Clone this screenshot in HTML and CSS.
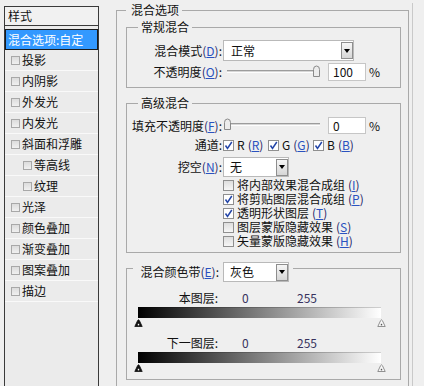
FILE: index.html
```html
<!DOCTYPE html>
<html lang="zh-CN">
<head>
<meta charset="utf-8">
<title>图层样式</title>
<link rel="stylesheet" href="styles.css">
</head>
<body>
<div class="dialog">
  <aside class="styles-panel">
    <div class="panel-head">样式</div>
    <ul class="style-list">
      <li class="item selected">混合选项:自定</li>
      <li class="item"><span class="lcb"></span>投影</li>
      <li class="item"><span class="lcb"></span>内阴影</li>
      <li class="item"><span class="lcb"></span>外发光</li>
      <li class="item"><span class="lcb"></span>内发光</li>
      <li class="item"><span class="lcb"></span>斜面和浮雕</li>
      <li class="item sub"><span class="lcb"></span>等高线</li>
      <li class="item sub"><span class="lcb"></span>纹理</li>
      <li class="item"><span class="lcb"></span>光泽</li>
      <li class="item"><span class="lcb"></span>颜色叠加</li>
      <li class="item"><span class="lcb"></span>渐变叠加</li>
      <li class="item"><span class="lcb"></span>图案叠加</li>
      <li class="item"><span class="lcb"></span>描边</li>
    </ul>
  </aside>

  <main class="main">
    <fieldset class="outer">
      <legend class="outer-legend">混合选项</legend>

      <fieldset class="group general">
        <legend>常规混合</legend>
        <div class="row r-mode">
          <span class="lbl">混合模式<span class="p">(<u>D</u>)</span>:</span>
          <div class="select wide"><span>正常</span><span class="arrow"><i></i></span></div>
        </div>
        <div class="row r-opacity">
          <span class="lbl">不透明度<span class="p">(<u>O</u>)</span>:</span>
          <div class="slider">
            <span class="track"></span>
            <svg class="thumb" style="left:89px" width="9" height="12" viewBox="0 0 9 12"><path d="M1.5 11.5V4.5Q1.5 1 4.5 1Q7.5 1 7.5 4.5V11.5Z" fill="#ececec" stroke="#8a8a8a"/></svg>
          </div>
          <span class="num-input">100</span>
          <span class="pct">%</span>
        </div>
      </fieldset>

      <fieldset class="group advanced">
        <legend>高级混合</legend>
        <div class="row r-fill">
          <span class="lbl">填充不透明度<span class="p">(<u>F</u>)</span>:</span>
          <div class="slider">
            <span class="track"></span>
            <svg class="thumb" style="left:0" width="9" height="12" viewBox="0 0 9 12"><path d="M1.5 11.5V4.5Q1.5 1 4.5 1Q7.5 1 7.5 4.5V11.5Z" fill="#ececec" stroke="#8a8a8a"/></svg>
          </div>
          <span class="num-input">0</span>
          <span class="pct">%</span>
        </div>
        <div class="row r-chan">
          <span class="lbl">通道:</span>
          <span class="chan"><span class="ck on"><svg width="9" height="9" viewBox="0 0 9 9"><path d="M1.5 4.5L3.5 7.5L7.8 1" fill="none" stroke="#2446a8" stroke-width="1.5"/></svg></span>R<span class="p">(<u>R</u>)</span></span>
          <span class="chan"><span class="ck on"><svg width="9" height="9" viewBox="0 0 9 9"><path d="M1.5 4.5L3.5 7.5L7.8 1" fill="none" stroke="#2446a8" stroke-width="1.5"/></svg></span>G<span class="p">(<u>G</u>)</span></span>
          <span class="chan"><span class="ck on"><svg width="9" height="9" viewBox="0 0 9 9"><path d="M1.5 4.5L3.5 7.5L7.8 1" fill="none" stroke="#2446a8" stroke-width="1.5"/></svg></span>B<span class="p">(<u>B</u>)</span></span>
        </div>
        <div class="row r-knock">
          <span class="lbl">挖空<span class="p">(<u>N</u>)</span>:</span>
          <div class="select short"><span>无</span><span class="arrow"><i></i></span></div>
        </div>
        <ul class="opt-list">
          <li class="opt"><span class="ck"></span>将内部效果混合成组<span class="p">(<u>I</u>)</span></li>
          <li class="opt"><span class="ck on"><svg width="9" height="9" viewBox="0 0 9 9"><path d="M1.5 4.5L3.5 7.5L7.8 1" fill="none" stroke="#2446a8" stroke-width="1.5"/></svg></span>将剪贴图层混合成组<span class="p">(<u>P</u>)</span></li>
          <li class="opt"><span class="ck on"><svg width="9" height="9" viewBox="0 0 9 9"><path d="M1.5 4.5L3.5 7.5L7.8 1" fill="none" stroke="#2446a8" stroke-width="1.5"/></svg></span>透明形状图层<span class="p">(<u>T</u>)</span></li>
          <li class="opt"><span class="ck"></span>图层蒙版隐藏效果<span class="p">(<u>S</u>)</span></li>
          <li class="opt"><span class="ck"></span>矢量蒙版隐藏效果<span class="p">(<u>H</u>)</span></li>
        </ul>
      </fieldset>

      <fieldset class="group blend">
        <legend><span class="legend-row"><span class="blbl">混合颜色带<span class="p">(<u>E</u>)</span>:</span><span class="select short"><span>灰色</span><span class="arrow"><i></i></span></span></span></legend>
        <div class="blend-block">
          <div class="blend-row"><span class="blend-lbl">本图层:</span><span class="v0">0</span><span class="v1">255</span></div>
          <div class="bar"></div>
          <div class="thumbs">
            <svg class="bthumb left" width="9" height="8" viewBox="0 0 9 8"><path d="M0.8 7.5L3.6 1.6Q4.5 0 5.4 1.6L8.2 7.5Z" fill="#111" stroke="#111" stroke-width="0.8"/><rect x="3.8" y="4.8" width="1.4" height="1.6" fill="#fff"/></svg>
            <svg class="bthumb right" width="9" height="8" viewBox="0 0 9 8"><path d="M0.8 7.5L3.6 1.6Q4.5 0 5.4 1.6L8.2 7.5Z" fill="#fafafa" stroke="#777" stroke-width="0.8"/><rect x="3.8" y="4.8" width="1.4" height="1.6" fill="#555"/></svg>
          </div>
        </div>
        <div class="blend-block second">
          <div class="blend-row"><span class="blend-lbl">下一图层:</span><span class="v0">0</span><span class="v1">255</span></div>
          <div class="bar"></div>
          <div class="thumbs">
            <svg class="bthumb left" width="9" height="8" viewBox="0 0 9 8"><path d="M0.8 7.5L3.6 1.6Q4.5 0 5.4 1.6L8.2 7.5Z" fill="#111" stroke="#111" stroke-width="0.8"/><rect x="3.8" y="4.8" width="1.4" height="1.6" fill="#fff"/></svg>
            <svg class="bthumb right" width="9" height="8" viewBox="0 0 9 8"><path d="M0.8 7.5L3.6 1.6Q4.5 0 5.4 1.6L8.2 7.5Z" fill="#fafafa" stroke="#777" stroke-width="0.8"/><rect x="3.8" y="4.8" width="1.4" height="1.6" fill="#555"/></svg>
          </div>
        </div>
      </fieldset>
    </fieldset>
  </main>
</div>
</body>
</html>
```

FILE: styles.css
```css
* { box-sizing: border-box; }

html, body {
  margin: 0;
  height: 100%;
  overflow: hidden;
  background: #efefef;
}

body {
  font-family: "Noto Sans CJK SC", "Noto Sans", sans-serif;
  font-size: 12px;
  line-height: 14px;
  color: #111;
}

.dialog {
  display: flex;
  align-items: flex-start;
  padding-left: 4px;
  height: 386px;
}

/* ---------- left styles panel ---------- */
.styles-panel {
  flex: none;
  width: 95px;
  height: 400px;
  margin-top: 6px;
  border: 1px solid #3a3a3a;
  background: #ebebeb;
}

.panel-head {
  height: 19px;
  line-height: 18px;
  padding-left: 3px;
  border-bottom: 1px solid #3a3a3a;
  background: #f1f1f1;
}

.style-list {
  list-style: none;
  margin: 3px 0 0;
  padding: 0;
}

.item {
  height: 21px;
  display: flex;
  align-items: center;
  gap: 2px;
  padding-left: 6px;
  border-bottom: 1px solid #f9f9f9;
  white-space: nowrap;
}

.item.sub { padding-left: 18px; }

.item.selected {
  background: #3399ff;
  color: #fff;
  border: 1px solid #1a1a1a;
  padding-left: 2px;
}

.lcb {
  flex: none;
  width: 9px;
  height: 9px;
  border: 1px solid #a8a8a8;
  background: linear-gradient(#dcdcdc, #f0f0f0);
}

/* ---------- main area ---------- */
.main {
  flex: none;
  width: 314px;
  height: 400px;
  margin-top: 3px;
  border-right: 1px solid #c9c9c9;
}

fieldset {
  margin: 0;
  min-width: 0;
  border: 1px solid #a9a9a9;
}

legend {
  line-height: 14px;
}

.outer {
  width: 293px;
  margin-left: 17px;
  padding: 3px 7px 12px 9px;
}

.outer-legend { padding: 0 3px 0 5px; }

.group {
  width: 275px;
  padding: 0;
}

.group > legend {
  margin-left: 11px;
  padding: 0 3px;
}

.general { padding: 6px 0 6px; }
.advanced { margin-top: 8px; padding: 7px 0 4px; }
.blend { margin-top: 1px; padding: 8px 0 8px; }

.row {
  display: flex;
  align-items: center;
}

.lbl {
  flex: none;
  width: 95px;
  margin-right: 1px;
  text-align: right;
  white-space: nowrap;
}

.p { color: #1c2466; }
.p u { color: #2a52c0; }

.r-mode { height: 21px; }
.r-opacity { height: 18px; margin-top: 2px; }
.r-fill { height: 17px; }
.r-chan { height: 16px; margin-top: 3px; }
.r-knock { height: 20px; margin-top: 4px; }

/* select */
.select {
  display: flex;
  align-items: center;
  background: #fff;
  border: 1px solid #b9b9b9;
  padding-left: 6px;
  white-space: nowrap;
}

.select.wide { width: 131px; height: 21px; padding-left: 7px; }
.select.short { width: 66px; height: 20px; }

.arrow {
  margin-left: auto;
  margin-right: 0;
  width: 12px;
  height: 17px;
  border: 1px solid #8e8e8e;
  background: linear-gradient(#f6f6f6, #d6d6d6);
  display: flex;
  align-items: center;
  justify-content: center;
}

.arrow i {
  width: 0;
  height: 0;
  border-left: 3.5px solid transparent;
  border-right: 3.5px solid transparent;
  border-top: 4px solid #000;
}

/* slider */
.slider {
  position: relative;
  flex: none;
  width: 104px;
  height: 17px;
}

.track {
  position: absolute;
  left: 4px;
  width: 93px;
  top: 6px;
  height: 3px;
  border-top: 1px solid #9c9c9c;
  border-bottom: 1px solid #fdfdfd;
  background: #d6d6d6;
}

.thumb {
  position: absolute;
  top: 1px;
}

.num-input {
  flex: none;
  width: 38px;
  height: 100%;
  margin-left: 1px;
  padding-left: 4px;
  display: flex;
  align-items: center;
  background: #fff;
  border: 1px solid #c6c6c6;
}

.pct { margin-left: 3px; }

/* checkboxes */
.chan {
  flex: none;
  width: 45px;
  display: flex;
  align-items: center;
  gap: 3px;
  white-space: nowrap;
}

.ck {
  flex: none;
  width: 11px;
  height: 11px;
  border: 1px solid #8f8f8f;
  background: linear-gradient(#dedede, #f6f6f6);
  display: flex;
  align-items: center;
  justify-content: center;
}

.ck.on { background: #fff; }

.opt-list {
  list-style: none;
  margin: 1px 0 0;
  padding: 0 0 0 96px;
}

.opt {
  height: 14px;
  display: flex;
  align-items: center;
  gap: 3px;
  white-space: nowrap;
}

/* blend if */
.blend > legend {
  margin-left: 6px;
  padding: 8px 4px 0 0;
  line-height: 20px;
}

.legend-row {
  display: flex;
  align-items: center;
}

.blbl {
  width: 86px;
  margin-right: 4px;
  text-align: right;
  white-space: nowrap;
}

.blend-row {
  height: 16px;
  display: flex;
  align-items: center;
}

.blend-lbl {
  width: 91px;
  text-align: right;
  white-space: nowrap;
}

.v0, .v1 { color: #37325e; }
.v0 { width: 55px; margin-left: 24px; }

.bar {
  margin: 1px 0 0 11px;
  width: 243px;
  height: 11px;
  background: linear-gradient(to right, #000, #fff);
  box-shadow: inset 0 1px rgba(0, 0, 0, 0.18);
}

.thumbs {
  position: relative;
  height: 8px;
}

.bthumb {
  position: absolute;
  top: 1px;
}

.bthumb.left { left: 7px; }
.bthumb.right { left: 250px; }

.blend-block.second { margin-top: 9px; }
```
